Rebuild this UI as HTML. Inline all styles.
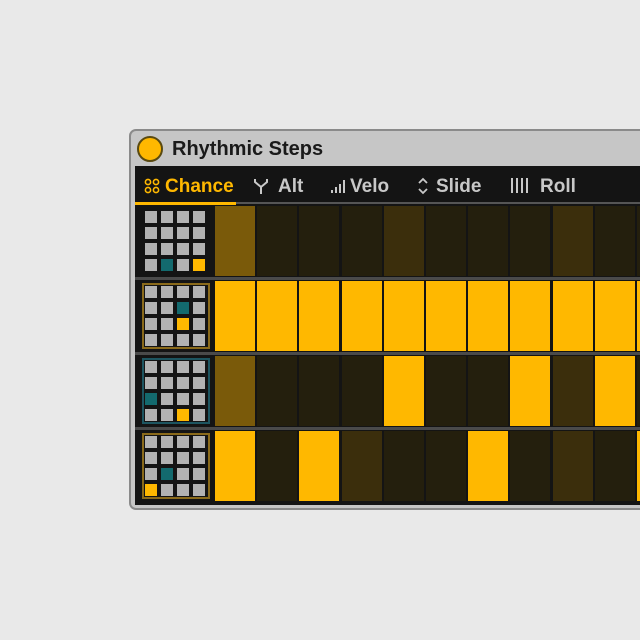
<!DOCTYPE html><html><head><style>
body{margin:0;width:640px;height:640px;background:#e9e9e9;position:relative;overflow:hidden;font-family:"Liberation Sans",sans-serif}
.win{position:absolute;left:129px;top:129px;width:540px;height:381px;background:#c6c6c6;border:2px solid #8a8a8a;border-radius:7px;box-sizing:border-box}
.dot{position:absolute;left:137px;top:136px;width:22px;height:22px;border-radius:50%;background:#ffb800;border:2px solid #5a4a10}
.title{position:absolute;left:172px;top:138px;font-size:20px;font-weight:bold;color:#1a1a1a}
.dark{position:absolute;left:135px;top:166px;width:520px;height:339px;background:#141414}
.tab{position:absolute;top:176px;font-size:19px;font-weight:bold;color:#c8c8c8}
.line{position:absolute;left:135px;top:202px;width:520px;height:2px;background:#555}
.uline{position:absolute;left:135px;top:202px;width:101px;height:3px;background:#ffb800}
.sep{position:absolute;left:135px;width:520px;height:3px;background:#4a4a4a}
.c{position:absolute;width:40px;height:70px}
.b{background:#ffb800}.d{background:#241f0d}.m{background:#3b2e0c}.r{background:#7a5a0a}
.g{position:absolute;width:12px;height:12px;background:#b2b2b2}
.box{position:absolute;width:68px;height:66px;box-sizing:border-box;border:2px solid #8a6a1a}
svg{position:absolute}
</style></head><body>
<div class="win"></div>
<div class="dot"></div>
<div class="title">Rhythmic Steps</div>
<div class="dark"></div>
<svg style="left:144px;top:178px" width="16" height="16"><g fill="none" stroke="#ffb800" stroke-width="1.6"><circle cx="4" cy="4" r="2.6"/><circle cx="12" cy="4" r="2.6"/><circle cx="4" cy="12" r="2.6"/><circle cx="12" cy="12" r="2.6"/></g></svg>
<div class="tab" style="left:165px;color:#ffb800">Chance</div>
<svg style="left:253px;top:177px" width="16" height="18"><path d="M2 2v3l6 5 6-5V2M8 10v7" fill="none" stroke="#c8c8c8" stroke-width="2"/></svg>
<div class="tab" style="left:278px">Alt</div>
<svg style="left:331px;top:180px" width="14" height="13"><g fill="#c8c8c8"><rect x="0" y="10" width="2" height="3"/><rect x="4" y="7" width="2" height="6"/><rect x="8" y="4" width="2" height="9"/><rect x="12" y="0" width="2" height="13"/></g></svg>
<div class="tab" style="left:350px">Velo</div>
<svg style="left:417px;top:177px" width="12" height="18"><path d="M2 6l4-4 4 4M2 12l4 4 4-4" fill="none" stroke="#c8c8c8" stroke-width="1.8"/></svg>
<div class="tab" style="left:436px">Slide</div>
<svg style="left:511px;top:178px" width="18" height="15"><g fill="#c8c8c8"><rect x="0" y="0" width="2" height="15"/><rect x="5" y="0" width="2" height="15"/><rect x="10" y="0" width="2" height="15"/><rect x="15" y="0" width="2" height="15"/></g></svg>
<div class="tab" style="left:540px">Roll</div>
<div class="line"></div><div class="uline"></div>
<div class="sep" style="top:277px"></div><div class="sep" style="top:352px"></div><div class="sep" style="top:427px"></div>
<div class="box" style="left:142px;top:283px"></div>
<div class="box" style="left:142px;top:358px;border-color:#1d5560"></div>
<div class="box" style="left:142px;top:433px"></div>
<div id="cells"></div>
<script>
var rows=[[206,"rdddmdddmdd"],[281,"bbbbbbbbbbb"],[356,"rdddbddbmbd"],[431,"bdbmddbdmdb"]];
var h="";
rows.forEach(function(r){var s=r[1];for(var i=0;i<11;i++){h+='<div class="c '+s[i]+'" style="left:'+(215+i*42.2)+'px;top:'+r[0]+'px"></div>';}});
var marks=[[[3,1],[3,3]],[[1,2],[2,2]],[[2,0],[3,2]],[[2,1],[3,0]]];
rows.forEach(function(r,k){for(var y=0;y<4;y++)for(var x=0;x<4;x++){var col="#b2b2b2";if(marks[k][0][0]==y&&marks[k][0][1]==x)col="#136a6e";if(marks[k][1][0]==y&&marks[k][1][1]==x)col="#ffb800";h+='<div class="g" style="left:'+(145+x*16)+'px;top:'+(r[0]+5+y*16)+'px;background:'+col+'"></div>';}});
document.getElementById("cells").innerHTML=h;
</script>
</body></html>
